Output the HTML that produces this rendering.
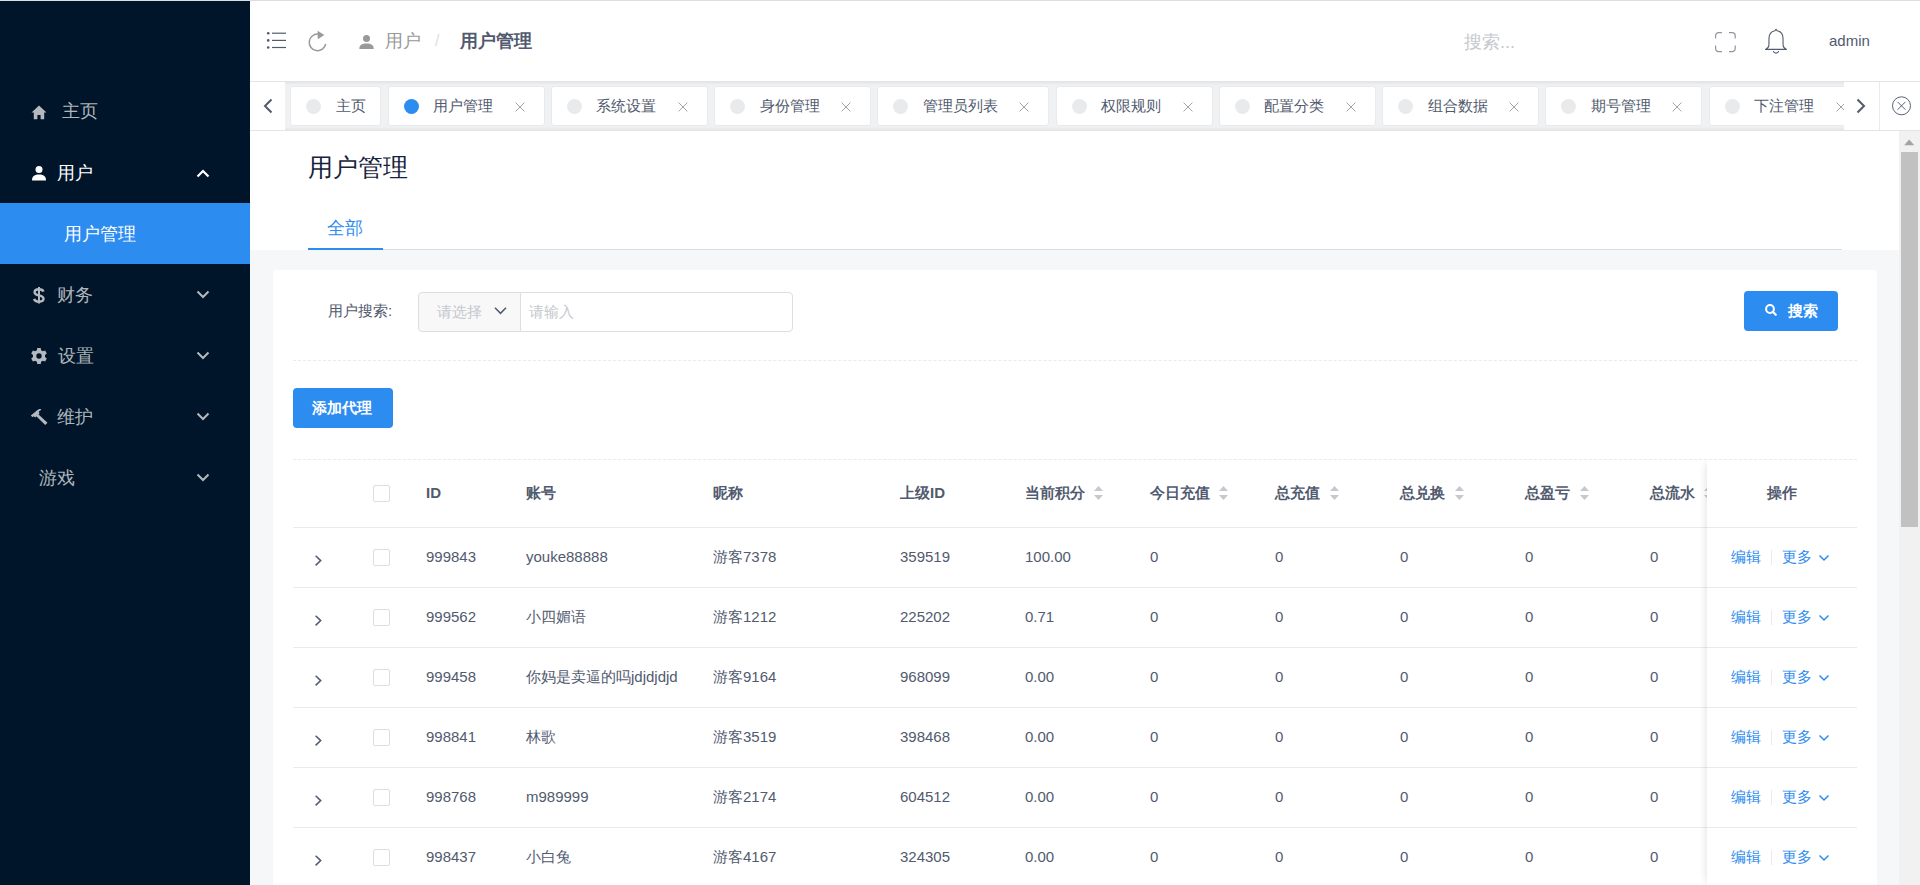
<!DOCTYPE html>
<html><head><meta charset="utf-8">
<style>
*{box-sizing:border-box;margin:0;padding:0}
html,body{width:1920px;height:885px;overflow:hidden}
body{position:relative;background:#f5f7f9;font-family:"Liberation Sans",sans-serif;color:#515a6e;font-size:15px}
.abs{position:absolute}
#topline{left:0;top:0;width:1920px;height:1px;background:#dcdee2}
#side{left:0;top:1px;width:250px;height:884px;background:#001529}
.mi{position:absolute;left:0;width:250px;height:61px;color:rgba(255,255,255,.7);font-size:18px}
.mi .t{position:absolute;top:0;line-height:61px;white-space:nowrap}
.mi svg{position:absolute}
#header{left:250px;top:1px;width:1670px;height:80px;background:#fff}
#tabbar{left:250px;top:81px;width:1670px;height:50px;background:#f0f0f0}
#pghead{left:250px;top:131px;width:1649px;height:119px;background:#fff}
#scroll{left:1899px;top:131px;width:21px;height:754px;background:#f1f1f1}
#card{left:273px;top:270px;width:1604px;height:700px;background:#fff;border-radius:4px}
.st{font-size:18px;line-height:18px;height:18px;margin-top:-9px;white-space:nowrap}
.bc{font-size:18px;line-height:18px;height:18px;margin-top:-9px;white-space:nowrap}
#tabbar{background:#f0f1f3;box-shadow:inset 0 0 3px 2px rgba(100,100,100,.1)}
.tab{position:absolute;top:5px;height:40px;background:#fff;border:1px solid #e8eaec;border-radius:3px;white-space:nowrap}
.tdot{position:absolute;left:15px;top:12px;width:15px;height:15px;border-radius:50%}
.tt{position:absolute;left:44.5px;top:11px;font-size:15px;line-height:16px;color:#515a6e}
.tx{position:absolute;left:127px;top:15px}
.t15{font-size:15px;line-height:16px;margin-top:-8px;white-space:nowrap}
.th{font-size:15px;line-height:16px;margin-top:-8px;white-space:nowrap;font-weight:bold;color:#515a6e}
.td{font-size:15px;line-height:16px;margin-top:-8px;white-space:nowrap;color:#515a6e}
.cb{width:17px;height:17px;border:1px solid #dcdee2;border-radius:2px;background:#fff}
.rl{width:1564px;height:1px;background:#e8eaec}
.fixc{width:150px;height:425px;background:#fff;box-shadow:-3px 0 8px -3px rgba(0,0,0,.14)}
</style></head><body>
<div id="topline" class="abs"></div>

<div id="side" class="abs">
</div>
<!-- sidebar items -->
<svg class="abs" style="left:31px;top:105px" width="16" height="15" viewBox="0 0 16 15"><path d="M8 0.5 L15.5 7.5 H13.2 V14.2 H9.6 V10 H6.4 V14.2 H2.8 V7.5 H0.5 Z" fill="#b3b9bf"/></svg>
<div class="abs st" style="left:62px;top:111px;color:rgba(255,255,255,.7)">主页</div>
<svg class="abs" style="left:31px;top:166px" width="16" height="15" viewBox="0 0 16 15"><circle cx="8" cy="3.6" r="3.5" fill="#fff"/><path d="M1 14.4 C1 10.2 4 8.6 8 8.6 C12 8.6 15 10.2 15 14.4 Z" fill="#fff"/></svg>
<div class="abs st" style="left:57px;top:173px;color:#fff">用户</div>
<svg class="abs" style="left:196px;top:169px" width="14" height="9" viewBox="0 0 14 9"><path d="M1.5 7.5 L7 2 L12.5 7.5" stroke="#fff" stroke-width="2.2" fill="none"/></svg>
<div class="abs" style="left:0;top:203px;width:250px;height:61px;background:#2d8cf0"></div>
<div class="abs st" style="left:64px;top:234px;color:#fff">用户管理</div>
<svg class="abs" style="left:32px;top:286px" width="14" height="18" viewBox="0 0 14 18"><rect x="6" y="1" width="2" height="16.5" fill="#b3b9bf"/><path d="M11.4 5.6 C10.9 3.9 9.3 3.2 7 3.2 C4.4 3.2 2.6 4.4 2.6 6.2 C2.6 8.3 4.6 8.9 7 9.4 C9.5 9.9 11.5 10.6 11.5 12.8 C11.5 14.7 9.6 15.7 7 15.7 C4.5 15.7 2.7 14.8 2.1 12.8" stroke="#b3b9bf" stroke-width="2.4" fill="none"/></svg>
<div class="abs st" style="left:57px;top:295px;color:rgba(255,255,255,.7)">财务</div>
<svg class="abs" style="left:196px;top:290px" width="14" height="9" viewBox="0 0 14 9"><path d="M1.5 1.5 L7 7 L12.5 1.5" stroke="#b3b9bf" stroke-width="2" fill="none"/></svg>
<svg class="abs" style="left:30px;top:347px" width="18" height="18" viewBox="0 0 18 18"><g fill="#b3b9bf"><path d="M7.3 1 H10.7 L11.1 3.3 L12.9 4.3 L15.1 3.5 L16.8 6.4 L15 7.9 V10.1 L16.8 11.6 L15.1 14.5 L12.9 13.7 L11.1 14.7 L10.7 17 H7.3 L6.9 14.7 L5.1 13.7 L2.9 14.5 L1.2 11.6 L3 10.1 V7.9 L1.2 6.4 L2.9 3.5 L5.1 4.3 L6.9 3.3 Z M9 6.3 A2.7 2.7 0 1 0 9 11.7 A2.7 2.7 0 1 0 9 6.3 Z" fill-rule="evenodd"/></g></svg>
<div class="abs st" style="left:58px;top:356px;color:rgba(255,255,255,.7)">设置</div>
<svg class="abs" style="left:196px;top:351px" width="14" height="9" viewBox="0 0 14 9"><path d="M1.5 1.5 L7 7 L12.5 1.5" stroke="#b3b9bf" stroke-width="2" fill="none"/></svg>
<svg class="abs" style="left:30px;top:407px" width="18" height="18" viewBox="0 0 18 18"><g fill="#b3b9bf"><path d="M0.8 8.6 L6.3 3.9 C7.9 2.5 9.6 1.9 11.2 2.1 L10.5 3.5 C9.7 3.8 9.1 4.3 8.7 5 L9.6 6.2 L5.3 10.6 L3.6 9.2 L2.5 10.2 Z"/><path d="M7.5 6.6 L17.5 15.8 L15.2 17.9 L5.6 8.6 Z"/></g></svg>
<div class="abs st" style="left:57px;top:417px;color:rgba(255,255,255,.7)">维护</div>
<svg class="abs" style="left:196px;top:412px" width="14" height="9" viewBox="0 0 14 9"><path d="M1.5 1.5 L7 7 L12.5 1.5" stroke="#b3b9bf" stroke-width="2" fill="none"/></svg>
<div class="abs st" style="left:39px;top:478px;color:rgba(255,255,255,.7)">游戏</div>
<svg class="abs" style="left:196px;top:473px" width="14" height="9" viewBox="0 0 14 9"><path d="M1.5 1.5 L7 7 L12.5 1.5" stroke="#b3b9bf" stroke-width="2" fill="none"/></svg>

<div id="header" class="abs"></div>
<svg class="abs" style="left:266px;top:31px" width="22" height="19" viewBox="0 0 22 19"><g fill="#515a6e"><circle cx="2.2" cy="2.2" r="1.3"/><circle cx="2.2" cy="9.4" r="1.3"/><circle cx="2.2" cy="16.5" r="1.3"/><rect x="6" y="1.6" width="14" height="1.2"/><rect x="6" y="8.8" width="14" height="1.2"/><rect x="6" y="15.9" width="14" height="1.2"/></g></svg>
<svg class="abs" style="left:306px;top:30px" width="24" height="24" viewBox="0 0 24 24"><path d="M19.7 13.8 A8.3 8.3 0 1 1 12.2 4.1" stroke="#999" stroke-width="1.5" fill="none"/><path d="M11.6 0.8 L18.3 5 L11.8 9.2 Z" fill="#999"/></svg>
<svg class="abs" style="left:359px;top:34px" width="15" height="16" viewBox="0 0 15 16"><circle cx="7.5" cy="4.6" r="3.5" fill="#999"/><path d="M0.3 15 C0.3 11 3 9.6 7.5 9.6 C12 9.6 14.7 11 14.7 15 Z" fill="#999"/></svg>
<div class="abs bc" style="left:385px;top:41px;color:#999">用户</div>
<div class="abs bc" style="left:435px;top:41px;color:#dcdee2;font-size:16px">/</div>
<div class="abs bc" style="left:460px;top:41px;color:#515a6e;font-weight:bold">用户管理</div>
<div class="abs bc" style="left:1464px;top:42px;color:#c5c8ce">搜索...</div>
<svg class="abs" style="left:1715px;top:32px" width="22" height="21" viewBox="0 0 22 21"><path d="M0.6 6.6 V3.6 A3 3 0 0 1 3.6 0.6 H6.9 M14 0.6 H17.2 A3 3 0 0 1 20.2 3.6 V6.6 M20.2 13.4 V16.6 A3 3 0 0 1 17.2 19.6 H14 M6.9 19.6 H3.6 A3 3 0 0 1 0.6 16.6 V13.4" stroke="#8f94a0" stroke-width="1.2" fill="none"/></svg>
<svg class="abs" style="left:1763px;top:28px" width="26" height="27" viewBox="0 0 26 27"><path d="M13 1.3 L14.1 2.7 C17.6 3.4 19.9 6.5 20 10 L20.1 17.3 C20.2 19 21.2 20.4 23.5 21.4 H2.5 C4.8 20.4 5.8 19 5.9 17.3 L6 10 C6.1 6.5 8.4 3.4 11.9 2.7 Z" stroke="#515a6e" stroke-width="1.1" fill="none" stroke-linejoin="round"/><path d="M10.3 23.1 A2.8 2.8 0 0 0 15.7 23.1" stroke="#515a6e" stroke-width="1.1" fill="none"/></svg>
<div class="abs" style="left:1829px;top:33px;font-size:15px;line-height:16px;color:#515a6e">admin</div>

<div id="tabbar" class="abs"></div>
<div class="abs" style="left:250px;top:82px;width:35px;height:48px;background:#fff"></div>
<svg class="abs" style="left:262px;top:98px" width="12" height="16" viewBox="0 0 12 16"><path d="M9.5 1.5 L3 8 L9.5 14.5" stroke="#515a6e" stroke-width="2" fill="none"/></svg>
<div class="abs" style="left:285px;top:81px;width:1559px;height:50px;overflow:hidden">
<div class="tab" style="left:calc(-285px + 290.3px);width:91px"><span class="tdot" style="background:#e8eaec"></span><span class="tt">主页</span></div>
<div class="tab" style="left:calc(-285px + 387.6px);width:157px"><span class="tdot" style="background:#2d8cf0"></span><span class="tt">用户管理</span><svg class="tx" style="left:126px" width="10" height="10" viewBox="0 0 10 10"><path d="M0.6 0.6 L9.4 9.4 M9.4 0.6 L0.6 9.4" stroke="#a3a3a3" stroke-width="1"/></svg></div>
<div class="tab" style="left:calc(-285px + 550.8px);width:157px"><span class="tdot" style="background:#e8eaec"></span><span class="tt">系统设置</span><svg class="tx" style="left:126px" width="10" height="10" viewBox="0 0 10 10"><path d="M0.6 0.6 L9.4 9.4 M9.4 0.6 L0.6 9.4" stroke="#a3a3a3" stroke-width="1"/></svg></div>
<div class="tab" style="left:calc(-285px + 714.0px);width:157px"><span class="tdot" style="background:#e8eaec"></span><span class="tt">身份管理</span><svg class="tx" style="left:126px" width="10" height="10" viewBox="0 0 10 10"><path d="M0.6 0.6 L9.4 9.4 M9.4 0.6 L0.6 9.4" stroke="#a3a3a3" stroke-width="1"/></svg></div>
<div class="tab" style="left:calc(-285px + 877.3px);width:172px"><span class="tdot" style="background:#e8eaec"></span><span class="tt">管理员列表</span><svg class="tx" style="left:141px" width="10" height="10" viewBox="0 0 10 10"><path d="M0.6 0.6 L9.4 9.4 M9.4 0.6 L0.6 9.4" stroke="#a3a3a3" stroke-width="1"/></svg></div>
<div class="tab" style="left:calc(-285px + 1055.5px);width:157px"><span class="tdot" style="background:#e8eaec"></span><span class="tt">权限规则</span><svg class="tx" style="left:126px" width="10" height="10" viewBox="0 0 10 10"><path d="M0.6 0.6 L9.4 9.4 M9.4 0.6 L0.6 9.4" stroke="#a3a3a3" stroke-width="1"/></svg></div>
<div class="tab" style="left:calc(-285px + 1218.8px);width:157px"><span class="tdot" style="background:#e8eaec"></span><span class="tt">配置分类</span><svg class="tx" style="left:126px" width="10" height="10" viewBox="0 0 10 10"><path d="M0.6 0.6 L9.4 9.4 M9.4 0.6 L0.6 9.4" stroke="#a3a3a3" stroke-width="1"/></svg></div>
<div class="tab" style="left:calc(-285px + 1382.0px);width:157px"><span class="tdot" style="background:#e8eaec"></span><span class="tt">组合数据</span><svg class="tx" style="left:126px" width="10" height="10" viewBox="0 0 10 10"><path d="M0.6 0.6 L9.4 9.4 M9.4 0.6 L0.6 9.4" stroke="#a3a3a3" stroke-width="1"/></svg></div>
<div class="tab" style="left:calc(-285px + 1545.3px);width:157px"><span class="tdot" style="background:#e8eaec"></span><span class="tt">期号管理</span><svg class="tx" style="left:126px" width="10" height="10" viewBox="0 0 10 10"><path d="M0.6 0.6 L9.4 9.4 M9.4 0.6 L0.6 9.4" stroke="#a3a3a3" stroke-width="1"/></svg></div>
<div class="tab" style="left:calc(-285px + 1708.5px);width:157px"><span class="tdot" style="background:#e8eaec"></span><span class="tt">下注管理</span><svg class="tx" style="left:126px" width="10" height="10" viewBox="0 0 10 10"><path d="M0.6 0.6 L9.4 9.4 M9.4 0.6 L0.6 9.4" stroke="#a3a3a3" stroke-width="1"/></svg></div>
</div>
<div class="abs" style="left:1844px;top:82px;width:76px;height:48px;background:#fff"></div>
<div class="abs" style="left:1879px;top:82px;width:1px;height:48px;background:#e8eaec"></div>
<svg class="abs" style="left:1855px;top:98px" width="12" height="16" viewBox="0 0 12 16"><path d="M2.5 1.5 L9 8 L2.5 14.5" stroke="#515a6e" stroke-width="2" fill="none"/></svg>
<svg class="abs" style="left:1891px;top:95px" width="22" height="22" viewBox="0 0 22 22"><circle cx="10.5" cy="10.8" r="9" stroke="#515a6e" stroke-width="0.95" fill="none"/><path d="M6.6 6.9 L14.4 14.7 M14.4 6.9 L6.6 14.7" stroke="#515a6e" stroke-width="0.95"/></svg>

<div id="pghead" class="abs"></div>
<div class="abs" style="left:308px;top:167px;font-size:25px;line-height:25px;margin-top:-12.5px;color:#17233d;white-space:nowrap">用户管理</div>
<div class="abs" style="left:327px;top:228px;font-size:18px;line-height:18px;margin-top:-9px;color:#2d8cf0;white-space:nowrap">全部</div>
<div class="abs" style="left:308px;top:249px;width:1534px;height:1px;background:#dcdee2"></div>
<div class="abs" style="left:308px;top:248px;width:75px;height:2px;background:#2d8cf0"></div>

<div id="scroll" class="abs"></div>
<svg class="abs" style="left:1899px;top:131px" width="21" height="17" viewBox="0 0 21 17"><path d="M10.2 8.5 L15.2 14.2 H5.2 Z" fill="#a3a3a3"/></svg>
<div class="abs" style="left:1901px;top:152px;width:17px;height:375px;background:#c1c1c1"></div>

<div id="card" class="abs"></div>
<div class="abs t15" style="left:328px;top:311px">用户搜索:</div>
<div class="abs" style="left:418px;top:292px;width:103px;height:40px;background:#f8f8f9;border:1px solid #dcdee2;border-radius:4px 0 0 4px"></div>
<div class="abs t15" style="left:437px;top:312px;color:#c5c8ce">请选择</div>
<svg class="abs" style="left:493px;top:305px" width="15" height="11" viewBox="0 0 15 11"><path d="M2 2.8 L7.5 8.3 L13 2.8" stroke="#515a6e" stroke-width="1.6" fill="none"/></svg>
<div class="abs" style="left:520px;top:292px;width:273px;height:40px;background:#fff;border:1px solid #dcdee2;border-radius:0 4px 4px 0"></div>
<div class="abs t15" style="left:529px;top:312px;color:#c5c8ce">请输入</div>
<div class="abs" style="left:1744px;top:291px;width:94px;height:40px;background:#2d8cf0;border-radius:4px"></div>
<svg class="abs" style="left:1764px;top:303px" width="14" height="14" viewBox="0 0 14 14"><circle cx="6" cy="6" r="3.9" stroke="#fff" stroke-width="2" fill="none"/><path d="M8.8 8.8 L11.8 11.8" stroke="#fff" stroke-width="2.2" stroke-linecap="round"/></svg>
<div class="abs t15" style="left:1788px;top:311px;color:#fff;font-weight:bold">搜索</div>
<div class="abs" style="left:293px;top:360px;width:1564px;height:0;border-top:1px dashed #e8eaec"></div>
<div class="abs" style="left:293px;top:388px;width:100px;height:40px;background:#2d8cf0;border-radius:4px"></div>
<div class="abs t15" style="left:312px;top:408px;color:#fff;font-weight:bold">添加代理</div>
<div class="abs" style="left:293px;top:459px;width:1564px;height:0;border-top:1px dashed #e8eaec"></div>

<div class="abs" style="left:293px;top:460px;width:1564px;height:425px;overflow:hidden">
<div class="abs cb" style="left:80px;top:25px"></div>
<div class="abs th" style="left:133px;top:33px">ID</div>
<div class="abs th" style="left:233px;top:33px">账号</div>
<div class="abs th" style="left:420px;top:33px">昵称</div>
<div class="abs th" style="left:607px;top:33px">上级ID</div>
<div class="abs th" style="left:732px;top:33px">当前积分</div>
<div class="abs th" style="left:857px;top:33px">今日充值</div>
<div class="abs th" style="left:982px;top:33px">总充值</div>
<div class="abs th" style="left:1107px;top:33px">总兑换</div>
<div class="abs th" style="left:1232px;top:33px">总盈亏</div>
<div class="abs th" style="left:1357px;top:33px">总流水</div>
<svg class="abs" style="left:800px;top:25px" width="11" height="16" viewBox="0 0 11 16"><path d="M5.5 1 L10 6 H1 Z M5.5 15 L10 10 H1 Z" fill="#c5c8ce"/></svg>
<svg class="abs" style="left:925px;top:25px" width="11" height="16" viewBox="0 0 11 16"><path d="M5.5 1 L10 6 H1 Z M5.5 15 L10 10 H1 Z" fill="#c5c8ce"/></svg>
<svg class="abs" style="left:1036px;top:25px" width="11" height="16" viewBox="0 0 11 16"><path d="M5.5 1 L10 6 H1 Z M5.5 15 L10 10 H1 Z" fill="#c5c8ce"/></svg>
<svg class="abs" style="left:1161px;top:25px" width="11" height="16" viewBox="0 0 11 16"><path d="M5.5 1 L10 6 H1 Z M5.5 15 L10 10 H1 Z" fill="#c5c8ce"/></svg>
<svg class="abs" style="left:1286px;top:25px" width="11" height="16" viewBox="0 0 11 16"><path d="M5.5 1 L10 6 H1 Z M5.5 15 L10 10 H1 Z" fill="#c5c8ce"/></svg>
<svg class="abs" style="left:1410px;top:25px" width="11" height="16" viewBox="0 0 11 16"><path d="M5.5 1 L10 6 H1 Z M5.5 15 L10 10 H1 Z" fill="#c5c8ce"/></svg>
<div class="abs rl" style="left:0px;top:67px"></div>
<svg class="abs" style="left:20px;top:94px" width="10" height="13" viewBox="0 0 10 13"><path d="M2.6 1.8 L7.7 6.6 L2.6 11.4" stroke="#515a6e" stroke-width="1.5" fill="none"/></svg>
<div class="abs cb" style="left:80px;top:89px"></div>
<div class="abs td" style="left:133px;top:97px">999843</div>
<div class="abs td" style="left:233px;top:97px">youke88888</div>
<div class="abs td" style="left:420px;top:97px">游客7378</div>
<div class="abs td" style="left:607px;top:97px">359519</div>
<div class="abs td" style="left:732px;top:97px">100.00</div>
<div class="abs td" style="left:857px;top:97px">0</div>
<div class="abs td" style="left:982px;top:97px">0</div>
<div class="abs td" style="left:1107px;top:97px">0</div>
<div class="abs td" style="left:1232px;top:97px">0</div>
<div class="abs td" style="left:1357px;top:97px">0</div>
<div class="abs rl" style="left:0px;top:127px"></div>
<svg class="abs" style="left:20px;top:154px" width="10" height="13" viewBox="0 0 10 13"><path d="M2.6 1.8 L7.7 6.6 L2.6 11.4" stroke="#515a6e" stroke-width="1.5" fill="none"/></svg>
<div class="abs cb" style="left:80px;top:149px"></div>
<div class="abs td" style="left:133px;top:157px">999562</div>
<div class="abs td" style="left:233px;top:157px">小四媚语</div>
<div class="abs td" style="left:420px;top:157px">游客1212</div>
<div class="abs td" style="left:607px;top:157px">225202</div>
<div class="abs td" style="left:732px;top:157px">0.71</div>
<div class="abs td" style="left:857px;top:157px">0</div>
<div class="abs td" style="left:982px;top:157px">0</div>
<div class="abs td" style="left:1107px;top:157px">0</div>
<div class="abs td" style="left:1232px;top:157px">0</div>
<div class="abs td" style="left:1357px;top:157px">0</div>
<div class="abs rl" style="left:0px;top:187px"></div>
<svg class="abs" style="left:20px;top:214px" width="10" height="13" viewBox="0 0 10 13"><path d="M2.6 1.8 L7.7 6.6 L2.6 11.4" stroke="#515a6e" stroke-width="1.5" fill="none"/></svg>
<div class="abs cb" style="left:80px;top:209px"></div>
<div class="abs td" style="left:133px;top:217px">999458</div>
<div class="abs td" style="left:233px;top:217px">你妈是卖逼的吗jdjdjdjd</div>
<div class="abs td" style="left:420px;top:217px">游客9164</div>
<div class="abs td" style="left:607px;top:217px">968099</div>
<div class="abs td" style="left:732px;top:217px">0.00</div>
<div class="abs td" style="left:857px;top:217px">0</div>
<div class="abs td" style="left:982px;top:217px">0</div>
<div class="abs td" style="left:1107px;top:217px">0</div>
<div class="abs td" style="left:1232px;top:217px">0</div>
<div class="abs td" style="left:1357px;top:217px">0</div>
<div class="abs rl" style="left:0px;top:247px"></div>
<svg class="abs" style="left:20px;top:274px" width="10" height="13" viewBox="0 0 10 13"><path d="M2.6 1.8 L7.7 6.6 L2.6 11.4" stroke="#515a6e" stroke-width="1.5" fill="none"/></svg>
<div class="abs cb" style="left:80px;top:269px"></div>
<div class="abs td" style="left:133px;top:277px">998841</div>
<div class="abs td" style="left:233px;top:277px">林歌</div>
<div class="abs td" style="left:420px;top:277px">游客3519</div>
<div class="abs td" style="left:607px;top:277px">398468</div>
<div class="abs td" style="left:732px;top:277px">0.00</div>
<div class="abs td" style="left:857px;top:277px">0</div>
<div class="abs td" style="left:982px;top:277px">0</div>
<div class="abs td" style="left:1107px;top:277px">0</div>
<div class="abs td" style="left:1232px;top:277px">0</div>
<div class="abs td" style="left:1357px;top:277px">0</div>
<div class="abs rl" style="left:0px;top:307px"></div>
<svg class="abs" style="left:20px;top:334px" width="10" height="13" viewBox="0 0 10 13"><path d="M2.6 1.8 L7.7 6.6 L2.6 11.4" stroke="#515a6e" stroke-width="1.5" fill="none"/></svg>
<div class="abs cb" style="left:80px;top:329px"></div>
<div class="abs td" style="left:133px;top:337px">998768</div>
<div class="abs td" style="left:233px;top:337px">m989999</div>
<div class="abs td" style="left:420px;top:337px">游客2174</div>
<div class="abs td" style="left:607px;top:337px">604512</div>
<div class="abs td" style="left:732px;top:337px">0.00</div>
<div class="abs td" style="left:857px;top:337px">0</div>
<div class="abs td" style="left:982px;top:337px">0</div>
<div class="abs td" style="left:1107px;top:337px">0</div>
<div class="abs td" style="left:1232px;top:337px">0</div>
<div class="abs td" style="left:1357px;top:337px">0</div>
<div class="abs rl" style="left:0px;top:367px"></div>
<svg class="abs" style="left:20px;top:394px" width="10" height="13" viewBox="0 0 10 13"><path d="M2.6 1.8 L7.7 6.6 L2.6 11.4" stroke="#515a6e" stroke-width="1.5" fill="none"/></svg>
<div class="abs cb" style="left:80px;top:389px"></div>
<div class="abs td" style="left:133px;top:397px">998437</div>
<div class="abs td" style="left:233px;top:397px">小白兔</div>
<div class="abs td" style="left:420px;top:397px">游客4167</div>
<div class="abs td" style="left:607px;top:397px">324305</div>
<div class="abs td" style="left:732px;top:397px">0.00</div>
<div class="abs td" style="left:857px;top:397px">0</div>
<div class="abs td" style="left:982px;top:397px">0</div>
<div class="abs td" style="left:1107px;top:397px">0</div>
<div class="abs td" style="left:1232px;top:397px">0</div>
<div class="abs td" style="left:1357px;top:397px">0</div>
<div class="abs rl" style="left:0px;top:427px"></div>
<div class="abs fixc" style="left:1414px;top:0px"></div>
<div class="abs th" style="left:1474px;top:33px">操作</div>
<div class="abs td" style="left:1438px;top:97px;color:#2d8cf0">编辑</div>
<div class="abs" style="left:1478px;top:90px;width:1px;height:15px;background:#e8eaec"></div>
<div class="abs td" style="left:1489px;top:97px;color:#2d8cf0">更多</div>
<svg class="abs" style="left:1525px;top:94px" width="12" height="8" viewBox="0 0 12 8"><path d="M1.5 1.5 L6 6 L10.5 1.5" stroke="#2d8cf0" stroke-width="1.5" fill="none"/></svg>
<div class="abs td" style="left:1438px;top:157px;color:#2d8cf0">编辑</div>
<div class="abs" style="left:1478px;top:150px;width:1px;height:15px;background:#e8eaec"></div>
<div class="abs td" style="left:1489px;top:157px;color:#2d8cf0">更多</div>
<svg class="abs" style="left:1525px;top:154px" width="12" height="8" viewBox="0 0 12 8"><path d="M1.5 1.5 L6 6 L10.5 1.5" stroke="#2d8cf0" stroke-width="1.5" fill="none"/></svg>
<div class="abs td" style="left:1438px;top:217px;color:#2d8cf0">编辑</div>
<div class="abs" style="left:1478px;top:210px;width:1px;height:15px;background:#e8eaec"></div>
<div class="abs td" style="left:1489px;top:217px;color:#2d8cf0">更多</div>
<svg class="abs" style="left:1525px;top:214px" width="12" height="8" viewBox="0 0 12 8"><path d="M1.5 1.5 L6 6 L10.5 1.5" stroke="#2d8cf0" stroke-width="1.5" fill="none"/></svg>
<div class="abs td" style="left:1438px;top:277px;color:#2d8cf0">编辑</div>
<div class="abs" style="left:1478px;top:270px;width:1px;height:15px;background:#e8eaec"></div>
<div class="abs td" style="left:1489px;top:277px;color:#2d8cf0">更多</div>
<svg class="abs" style="left:1525px;top:274px" width="12" height="8" viewBox="0 0 12 8"><path d="M1.5 1.5 L6 6 L10.5 1.5" stroke="#2d8cf0" stroke-width="1.5" fill="none"/></svg>
<div class="abs td" style="left:1438px;top:337px;color:#2d8cf0">编辑</div>
<div class="abs" style="left:1478px;top:330px;width:1px;height:15px;background:#e8eaec"></div>
<div class="abs td" style="left:1489px;top:337px;color:#2d8cf0">更多</div>
<svg class="abs" style="left:1525px;top:334px" width="12" height="8" viewBox="0 0 12 8"><path d="M1.5 1.5 L6 6 L10.5 1.5" stroke="#2d8cf0" stroke-width="1.5" fill="none"/></svg>
<div class="abs td" style="left:1438px;top:397px;color:#2d8cf0">编辑</div>
<div class="abs" style="left:1478px;top:390px;width:1px;height:15px;background:#e8eaec"></div>
<div class="abs td" style="left:1489px;top:397px;color:#2d8cf0">更多</div>
<svg class="abs" style="left:1525px;top:394px" width="12" height="8" viewBox="0 0 12 8"><path d="M1.5 1.5 L6 6 L10.5 1.5" stroke="#2d8cf0" stroke-width="1.5" fill="none"/></svg>
<div class="abs" style="left:1414px;top:67px;width:150px;height:1px;background:#e8eaec"></div>
<div class="abs" style="left:1414px;top:127px;width:150px;height:1px;background:#e8eaec"></div>
<div class="abs" style="left:1414px;top:187px;width:150px;height:1px;background:#e8eaec"></div>
<div class="abs" style="left:1414px;top:247px;width:150px;height:1px;background:#e8eaec"></div>
<div class="abs" style="left:1414px;top:307px;width:150px;height:1px;background:#e8eaec"></div>
<div class="abs" style="left:1414px;top:367px;width:150px;height:1px;background:#e8eaec"></div>
<div class="abs" style="left:1414px;top:427px;width:150px;height:1px;background:#e8eaec"></div>
</div>
</body></html>
